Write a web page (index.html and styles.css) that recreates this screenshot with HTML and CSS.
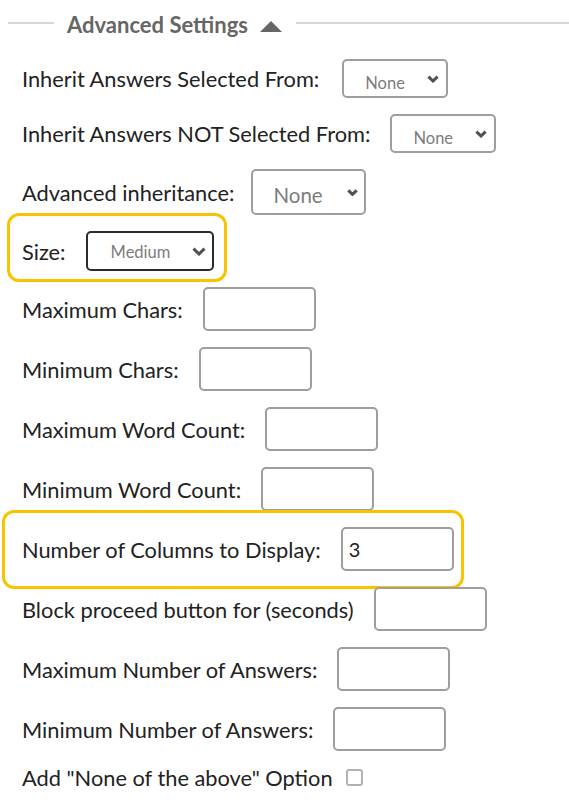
FILE: index.html
```html
<!DOCTYPE html>
<html lang="en">
<head>
<meta charset="utf-8">
<title>Advanced Settings</title>
<link rel="stylesheet" href="styles.css">
</head>
<body>
<div class="panel">
  <div class="legend">
    <span class="legend-line short"></span>
    <span class="legend-title">Advanced Settings</span>
    <svg class="caret" width="22" height="11" viewBox="0 0 22 11"><path d="M11 0 L22 11 L0 11 Z" fill="#666"/></svg>
    <span class="legend-line long"></span>
  </div>

  <div class="row first">
    <label class="lbl">Inherit Answers Selected From:</label>
    <div class="select sel-sm"><span class="sel-text">None</span><svg class="chev" width="12" height="8" viewBox="0 0 12 8"><path d="M1.4 1.6 L6 6 L10.6 1.6" /></svg></div>
  </div>

  <div class="row">
    <label class="lbl">Inherit Answers NOT Selected From:</label>
    <div class="select sel-sm"><span class="sel-text">None</span><svg class="chev" width="12" height="8" viewBox="0 0 12 8"><path d="M1.4 1.6 L6 6 L10.6 1.6" /></svg></div>
  </div>

  <div class="row gap-tight">
    <label class="lbl">Advanced inheritance:</label>
    <div class="select sel-lg"><span class="sel-text">None</span><svg class="chev" width="11" height="7" viewBox="0 0 11 7"><path d="M1.3 1.4 L5.5 5.4 L9.7 1.4" /></svg></div>
  </div>

  <div class="hl hl-size">
    <div class="row">
      <label class="lbl">Size:</label>
      <div class="select sel-size"><span class="sel-text">Medium</span><svg class="chev" width="14" height="9" viewBox="0 0 14 9"><path d="M1.5 1.7 L7 7 L12.5 1.7" /></svg></div>
    </div>
  </div>

  <div class="row">
    <label class="lbl">Maximum Chars:</label>
    <input class="field" type="text">
  </div>

  <div class="row">
    <label class="lbl">Minimum Chars:</label>
    <input class="field" type="text">
  </div>

  <div class="row">
    <label class="lbl">Maximum Word Count:</label>
    <input class="field" type="text">
  </div>

  <div class="row">
    <label class="lbl">Minimum Word Count:</label>
    <input class="field" type="text">
  </div>

  <div class="hl hl-cols">
    <div class="row">
      <label class="lbl">Number of Columns to Display:</label>
      <input class="field" type="text" value="3">
    </div>
  </div>

  <div class="row">
    <label class="lbl">Block proceed button for (seconds)</label>
    <input class="field" type="text">
  </div>

  <div class="row">
    <label class="lbl">Maximum Number of Answers:</label>
    <input class="field" type="text">
  </div>

  <div class="row">
    <label class="lbl">Minimum Number of Answers:</label>
    <input class="field" type="text">
  </div>

  <div class="row check-row">
    <label class="lbl">Add "None of the above" Option</label>
    <input class="check" type="checkbox">
  </div>
</div>
</body>
</html>
```
FILE: styles.css
```css
* {
  box-sizing: border-box;
}

body {
  margin: 0;
  background: #ffffff;
  font-family: Lato, "Open Sans", sans-serif;
  color: #222222;
}

.panel {
  display: flex;
  flex-direction: column;
  gap: 16px;
  padding-left: 22px;
}

/* legend / section header */
.legend {
  display: flex;
  align-items: center;
  height: 46px;
  margin-left: -14px;
}

.legend-line {
  height: 2px;
  background: #d6d6d6;
}

.legend-line.short {
  width: 46px;
}

.legend-line.long {
  flex: 1;
}

.legend-title {
  font-size: 22px;
  font-weight: 700;
  color: #666666;
  margin: 3px 12px 0 13px;
  white-space: nowrap;
}

.caret {
  margin: 6px 14px 0 0;
  flex: none;
}

/* rows */
.row {
  display: flex;
  align-items: center;
  gap: 20px;
}

.row.first {
  margin-top: -3px;
  gap: 23px;
}

.row.gap-tight {
  gap: 17px;
}

.lbl {
  font-size: 21.8px;
  white-space: nowrap;
  color: #222222;
}

/* fake selects */
.select {
  display: flex;
  align-items: center;
  justify-content: space-between;
  flex: none;
  border: 2px solid #9e9e9e;
  border-radius: 5px;
  background: #ffffff;
  color: #7c7c7c;
  font-size: 16.5px;
}

.chev {
  flex: none;
}

.chev path {
  fill: none;
  stroke: #505050;
  stroke-width: 3;
  stroke-linecap: butt;
  stroke-linejoin: miter;
}

.sel-sm {
  width: 106px;
  height: 39px;
  padding: 0 7px 0 21px;
}

.sel-sm .sel-text {
  padding-top: 8px;
}

.sel-lg {
  width: 115px;
  height: 46px;
  padding: 0 6px 0 20px;
  font-size: 20.5px;
}

.sel-lg .sel-text {
  padding-top: 6px;
}

.sel-size {
  width: 128px;
  height: 40px;
  padding: 0 6px 0 23px;
  border-color: #2b2b2b;
}

.sel-size .sel-text {
  padding-top: 2px;
}

/* text inputs */
.field {
  flex: none;
  width: 113px;
  height: 44px;
  margin: 0;
  padding: 0 4px 0 6px;
  border: 2px solid #9e9e9e;
  border-radius: 5px;
  background: #ffffff;
  font-family: Lato, "Open Sans", sans-serif;
  font-size: 20px;
  color: #222222;
  outline: none;
}

/* checkbox */
.check-row {
  margin-top: -3.5px;
  gap: 13px;
}

.check {
  appearance: none;
  -webkit-appearance: none;
  flex: none;
  width: 17px;
  height: 17px;
  margin: 0;
  border: 2px solid #b3b3b3;
  border-radius: 3px;
  background: #ffffff;
}

/* yellow highlight frames */
.hl {
  display: flex;
  align-self: flex-start;
  width: fit-content;
  border: 3px solid #f8c300;
  border-radius: 12px;
}

.hl-size {
  margin: -18px 0 -11px -15px;
  padding: 15px 10px 8px 12px;
}

.hl-cols {
  margin: -17px 0 -18px -20px;
  padding: 14px 7px 15px 17px;
}
```
